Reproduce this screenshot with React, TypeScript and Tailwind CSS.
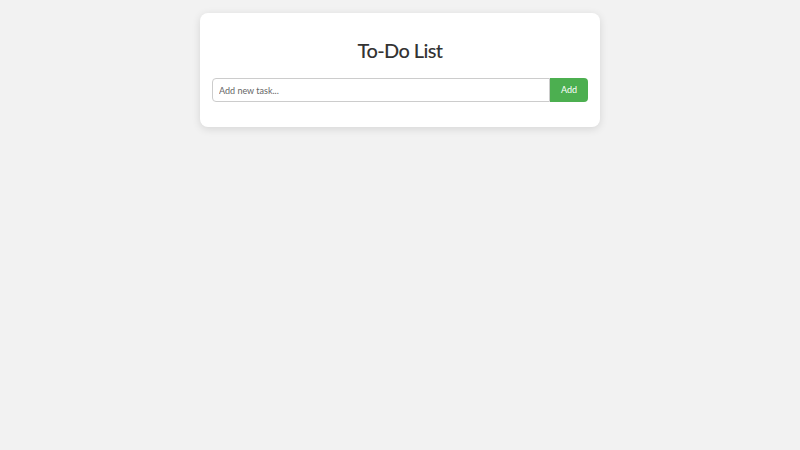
export default function App() {
  return (
    <div className="min-h-screen w-full bg-[#f2f2f2] pt-[13px] font-['Lato',sans-serif]">
      <div className="mx-auto w-[400px] rounded-lg bg-white px-3 pt-[24px] pb-[25px] shadow-[0_2px_8px_rgba(0,0,0,0.12)]">
        <h1 className="mb-[14px] text-center text-[20px] leading-[27px] font-medium tracking-[-0.6px] text-[#333]">
          To-Do List
        </h1>
        <div className="flex h-6">
          <input
            type="text"
            placeholder="Add new task..."
            className="h-6 flex-1 rounded-l border border-[#ccc] px-[6px] text-[9px] text-[#333] placeholder:text-[#666] outline-none"
          />
          <button className="h-6 w-[38px] rounded-r bg-[#4caf50] text-[9px] text-white">
            Add
          </button>
        </div>
      </div>
    </div>
  );
}
